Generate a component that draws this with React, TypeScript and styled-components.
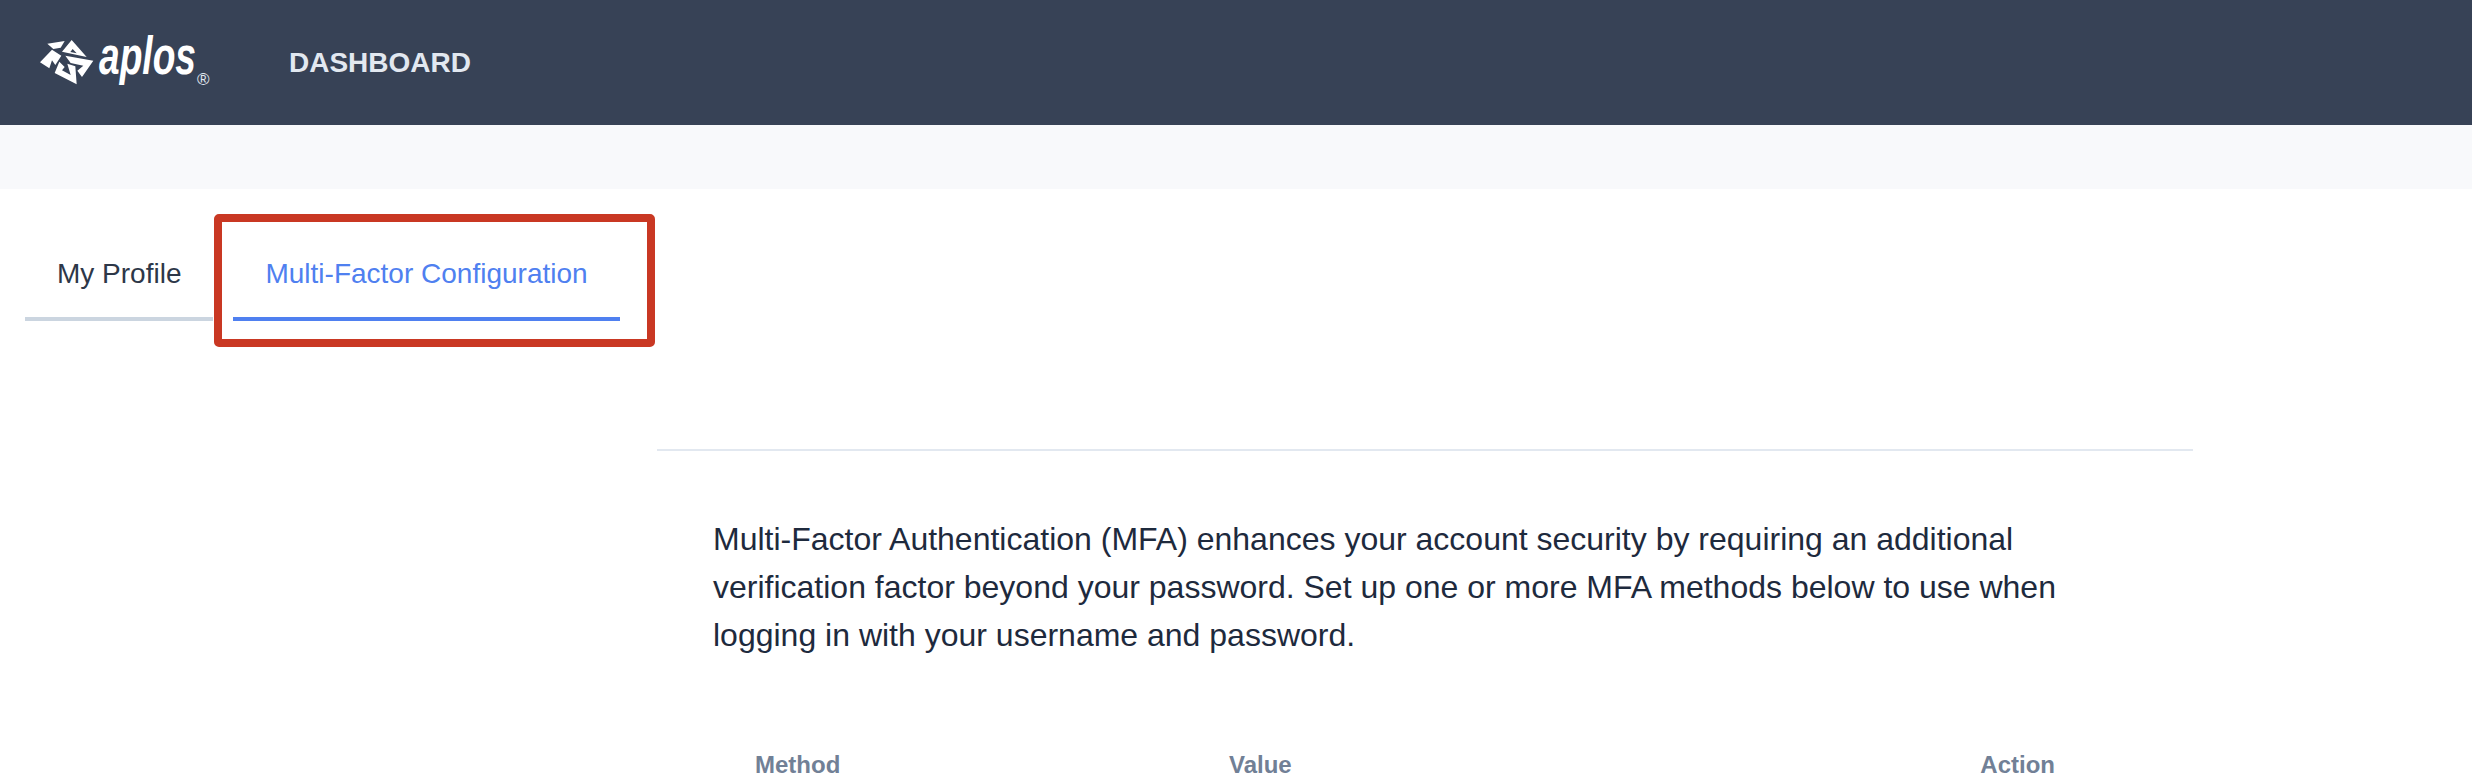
import React from 'react';
import styled, { createGlobalStyle } from 'styled-components';

const GlobalStyle = createGlobalStyle`
  html, body {
    margin: 0;
    height: 100%;
    overflow: hidden;
    background: #fff;
  }

  body {
    font-family: "Liberation Sans", Arial, sans-serif;
  }
`;

const Header = styled.header`
  display: flex;
  align-items: center;
  height: 125px;
  padding-left: 36px;
  background: #374256;
`;

const LogoMark = styled.svg`
  display: block;
  width: 176px;
  height: 84px;
`;

const NavLink = styled.a`
  margin-left: 77px;
  color: #e2e8f0;
  font-size: 28px;
  font-weight: 700;
  line-height: 40px;
`;

const Band = styled.div`
  height: 64px;
  background: #f8f9fb;
`;

const TabBar = styled.nav`
  display: flex;
  gap: 20px;
  margin-top: 32px;
  padding-left: 25px;
`;

const Tab = styled.a<{ $active?: boolean }>`
  position: relative;
  padding: 32px 32px 22px;
  border-bottom: 4px solid ${(p) => (p.$active ? '#4f80f0' : '#cbd5e0')};
  color: ${(p) => (p.$active ? '#4f80f0' : '#2d3748')};
  font-size: 28px;
  line-height: 42px;
`;

// annotation drawn on top of the screenshot
const Highlight = styled.span`
  position: absolute;
  top: -7px;
  left: -19px;
  right: -35px;
  bottom: -30px;
  border: 8px solid #c93823;
  border-radius: 5px;
`;

const Content = styled.section`
  box-sizing: border-box;
  width: 1536px;
  margin: 128px 0 0 657px;
  border-top: 2px solid #e2e8f0;
  padding: 64px 56px 0;
`;

const Intro = styled.p`
  margin: 0;
  color: #1e2a3d;
  font-size: 32px;
  line-height: 48px;
`;

const TableHead = styled.div`
  display: grid;
  grid-template-columns: 474px 1fr auto;
  margin-top: 88px;
  padding: 0 82px 0 42px;
`;

const HeadCell = styled.div`
  color: #718096;
  font-size: 24px;
  font-weight: 700;
  line-height: 36px;
`;

const App: React.FC = () => (
  <>
    <GlobalStyle />
    <Header>
      <LogoMark viewBox="0 -14 176 84">
        <g fill="#fff" transform="translate(4 4) scale(0.3333)">
          <polygon points="22,14 74,6 62,26 40,30" />
          <path fillRule="evenodd" d="M95,3 L140,54 L66,38 Z M98,30 L91,39 L110,43 Z" />
          <polygon points="76,50 160,65 126,114 112,95 130,80 92,72" />
          <polygon points="110,136 44,102 58,68 74,84 66,94 92,108 82,74 106,82" />
          <polygon points="36,32 0,70 28,88 36,64 46,78 64,50" />
        </g>
        <text
          x="63"
          y="39"
          fill="#fff"
          fontFamily="'Liberation Sans', Arial, sans-serif"
          fontStyle="italic"
          fontWeight="700"
          fontSize="54"
          textLength="97"
          lengthAdjust="spacingAndGlyphs"
        >
          aplos
        </text>
        <text x="161" y="50" fill="#e2e8f0" fontFamily="'Liberation Sans', Arial, sans-serif" fontSize="17">
          ®
        </text>
      </LogoMark>
      <NavLink>DASHBOARD</NavLink>
    </Header>
    <Band />
    <TabBar>
      <Tab>My Profile</Tab>
      <Tab $active>
        Multi-Factor Configuration
        <Highlight />
      </Tab>
    </TabBar>
    <Content>
      <Intro>
        Multi-Factor Authentication (MFA) enhances your account security by requiring an additional verification factor
        beyond your password. Set up one or more MFA methods below to use when logging in with your username and
        password.
      </Intro>
      <TableHead>
        <HeadCell>Method</HeadCell>
        <HeadCell>Value</HeadCell>
        <HeadCell>Action</HeadCell>
      </TableHead>
    </Content>
  </>
);

export default App;
